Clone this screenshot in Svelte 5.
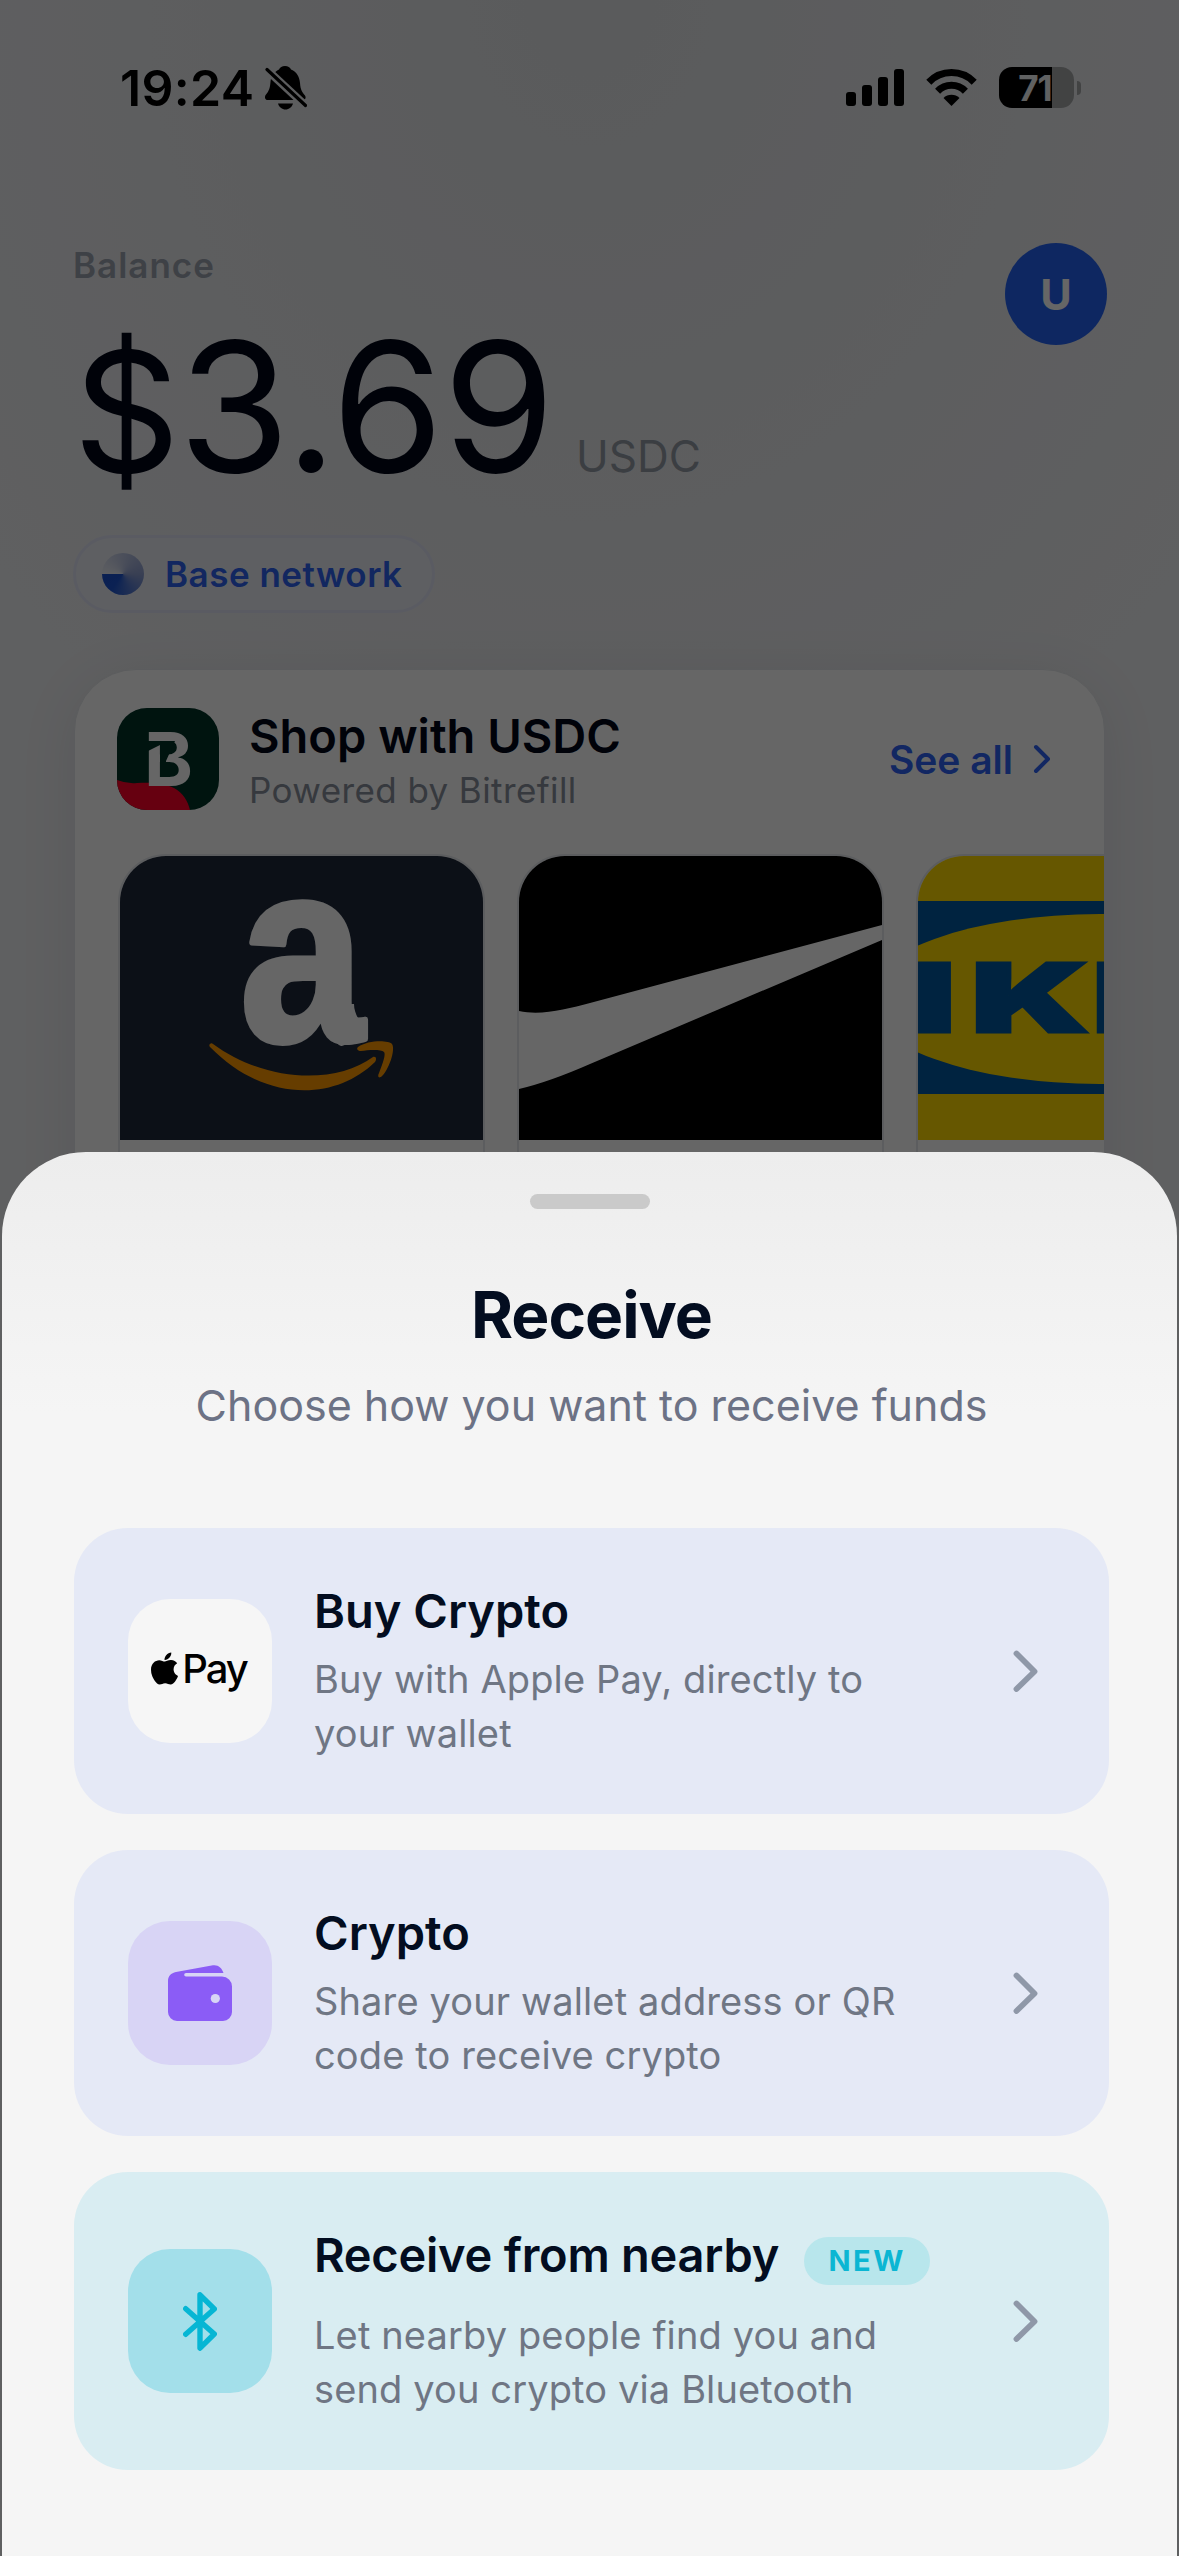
<script>
	const bars = [14, 21, 29, 37];

	const shops = ["amazon", "nike", "ikea"];

	const options = [
		{
			id: "buy",
			title: "Buy Crypto",
			lines: ["Buy with Apple Pay, directly to", "your wallet"]
		},
		{
			id: "crypto",
			title: "Crypto",
			lines: ["Share your wallet address or QR", "code to receive crypto"]
		},
		{
			id: "nearby",
			title: "Receive from nearby",
			badge: "NEW",
			lines: ["Let nearby people find you and", "send you crypto via Bluetooth"]
		}
	];
</script>

{#snippet shopImage(name)}
	<svg class="shop-image" viewBox="0 0 363 284">
		{#if name === "amazon"}
			<rect width="363" height="284" fill="#1f293b" />
			<text class="amazon-letter" x="120" y="185" textLength="124" lengthAdjust="spacingAndGlyphs">a</text>
			<path fill="#fff" d="M200 148H234C234 160 243 168 244 174C242 180 226 190 221 190C216 188 208 178 205 172Z" />
			<g fill="#ff9900">
				<path d="M93 188C145 226 215 229 253 201C256 200 257 203 255 206C215 245 145 247 90 191C88 189 91 186 93 188Z" />
				<path d="M238 191C248 184 268 184 272 188C276 194 268 215 262 220C259 223 257 221 259 217C263 207 266 198 264 196C261 193 248 194 241 195C238 195 236 193 238 191Z" />
			</g>
		{:else if name === "nike"}
			<rect width="363" height="284" fill="#000" />
			<path fill="#fff" d="M0 155C22 160 48 153 71 147L363 69V84L71 208Q30 226 0 233Z" />
		{:else}
			<rect width="363" height="284" fill="#ffda00" />
			<rect y="45" width="363" height="193" fill="#0058a0" />
			<ellipse cx="182" cy="143" rx="234" ry="85" fill="#ffda00" />
			<g class="ikea-letters">
				<text x="-26" y="176" textLength="66" lengthAdjust="spacingAndGlyphs">I</text>
				<text x="53" y="176" textLength="118" lengthAdjust="spacingAndGlyphs">K</text>
				<text x="174" y="176" textLength="94" lengthAdjust="spacingAndGlyphs">E</text>
			</g>
		{/if}
	</svg>
{/snippet}

{#snippet optionIcon(id)}
	{#if id === "buy"}
		<svg width="27" height="33" viewBox="4 32 376 448">
			<path d="M318.7 268.7c-.2-36.7 16.4-64.4 50-84.8-18.8-26.9-47.2-41.7-84.7-44.6-35.5-2.8-74.3 20.7-88.5 20.7-15 0-49.4-19.7-76.4-19.7C63.3 141.2 4 184.8 4 273.5q0 39.3 14.4 81.2c12.8 36.7 59 126.7 107.2 125.2 25.2-.6 43-17.9 75.8-17.9 31.8 0 48.3 17.9 76.4 17.9 48.6-.7 90.4-82.5 102.6-119.3-65.2-30.7-61.7-90-61.7-91.9zm-56.6-164.2c27.3-32.4 24.8-61.9 24-72.5-24.1 1.4-52 16.4-67.9 34.9-17.5 19.8-27.8 44.3-25.6 71.9 26.1 2 49.9-11.4 69.5-34.3z" />
		</svg>
		<span class="pay">Pay</span>
	{:else if id === "crypto"}
		<svg width="64" height="56" viewBox="0 0 64 56">
			<path fill="#8b5cf6" d="M8 7L45 .3C50-.5 54 3 55.5 8H18a1.8 1.8 0 0 0 0 3.6H54a10 10 0 0 1 10 10V47a9 9 0 0 1-9 9H9a9 9 0 0 1-9-9V16C0 11 3 8 8 7z" />
			<circle cx="47.3" cy="33.5" r="4.6" fill="#d8d4f5" />
		</svg>
	{:else}
		<svg width="34" height="59" viewBox="0 0 34 59" fill="none" stroke="#06b6d4" stroke-width="5.4" stroke-linecap="round" stroke-linejoin="round">
			<path d="M2.7 16.7L31.3 42L17 56.2V2.8L31.3 17L2.7 42.3" />
		</svg>
	{/if}
{/snippet}

<div class="screen">
	<div class="home">
		<div class="status">
			<div class="clock">
				<span>19:24</span>
				<svg width="42" height="44" viewBox="0 0 42 44">
					<mask id="slash">
						<rect width="42" height="44" fill="#fff" />
						<path d="M-1 1L43 42" stroke="#000" stroke-width="8" />
					</mask>
					<g mask="url(#slash)">
						<path d="M20 0C23 0 25 1.500 26 3.500C32 6 34.500 11 35 17C35.500 24 37 26 40 29.500C41.500 32 40 34 38 34H3C0 34-1 31 1 28.500C4 25 5 22 5.500 16C6 10 9 6 14 3.500C15 1.500 17 0 20 0Z" />
						<path d="M13 37.500H28C27 41 24 43.500 20.500 43.500S14 41 13 37.500Z" />
					</g>
					<path d="M2 3.500L40.500 39.500" stroke="#000" stroke-width="3.200" stroke-linecap="round" />
				</svg>
			</div>
			<div class="indicators">
				<div class="signal">
					{#each bars as height}
						<i style="height: {height}px"></i>
					{/each}
				</div>
				<svg width="51" height="37" viewBox="0 0 51 37">
					<path d="M2.800 13.200A31.500 31.500 0 0 1 48.200 13.200M11.600 22.200A19.300 19.300 0 0 1 39.400 22.200" fill="none" stroke="#000" stroke-width="7" />
					<path d="M25.500 37L17.500 29A11.500 11.500 0 0 1 33.500 29Z" />
				</svg>
				<div class="battery">
					<div class="cell">71</div>
					<i class="tip"></i>
				</div>
			</div>
		</div>

		<div class="header">
			<div class="balance">
				<div class="label">Balance</div>
				<div class="amount">
					<span class="value"><span class="sign">$</span>3.69</span>
					<span class="currency">USDC</span>
				</div>
				<div class="network">
					<i></i>
					<span>Base network</span>
				</div>
			</div>
			<div class="avatar">U</div>
		</div>

		<div class="shop">
			<div class="shop-header">
				<svg class="logo" width="102" height="102" viewBox="0 0 102 102">
					<rect width="102" height="102" fill="#003227" />
					<path d="M0 72Q10 76 20 75C40 74 48 76 57 80C66 85 71 93 73 102H0Z" fill="#ff0028" />
					<text x="27" y="78">B</text>
					<path d="M31 33H58L49 53V64H43V37L31 43Z" fill="#003227" />
				</svg>
				<div class="shop-text">
					<div class="shop-title">Shop with USDC</div>
					<div class="shop-subtitle">Powered by Bitrefill</div>
				</div>
				<div class="see-all">
					<span>See all</span>
					<svg width="18" height="30" viewBox="0 0 18 30" fill="none" stroke="#2d63f5" stroke-width="4" stroke-linecap="round" stroke-linejoin="round">
						<path d="M3 3L15 15L3 27" />
					</svg>
				</div>
			</div>
			<div class="tiles">
				{#each shops as shop}
					<div class="tile">{@render shopImage(shop)}</div>
				{/each}
			</div>
		</div>
	</div>

	<div class="scrim"></div>

	<div class="sheet">
		<div class="handle"></div>
		<h1>Receive</h1>
		<p class="intro">Choose how you want to receive funds</p>
		<div class="options">
			{#each options as option}
				<div class="option {option.id}">
					<div class="icon">{@render optionIcon(option.id)}</div>
					<div class="option-text">
						<div class="option-title">
							<span>{option.title}</span>
							{#if option.badge}
								<b>{option.badge}</b>
							{/if}
						</div>
						{#each option.lines as line}
							<div class="line">{line}</div>
						{/each}
					</div>
					<svg class="chevron" width="26" height="42" viewBox="0 0 26 42" fill="none" stroke-width="5.800" stroke-linecap="round" stroke-linejoin="round">
						<path d="M3.500 3.500L21.500 21.500L3.500 39" />
					</svg>
				</div>
			{/each}
		</div>
	</div>
</div>

<style>
	:global(body)
	{
		margin: 0;
		background: #626365;
	}

	.screen
	{
		position: relative;
		width: 1179px;
		height: 2556px;
		overflow: hidden;
		font-family: Inter, "Liberation Sans", sans-serif;
		color: #020617;
	}

	.home
	{
		box-sizing: border-box;
		height: 100%;
		padding: 0 72px 0 73px;
		background: radial-gradient(ellipse 760px 900px at 50% 0, #e1e3e6, #eeeff2);
	}

	.status
	{
		display: flex;
		box-sizing: border-box;
		justify-content: space-between;
		align-items: center;
		height: 177px;
		padding: 0 26px 2px 47px;
		color: #000;
	}

	.clock, .indicators
	{
		display: flex;
		align-items: center;
	}

	.clock
	{
		gap: 11px;
		font-size: 50px;
		font-weight: 600;
		letter-spacing: 0.3px;
	}

	.indicators
	{
		gap: 22px;
	}

	.signal
	{
		display: flex;
		align-items: flex-end;
		gap: 6px;
	}

	.signal i
	{
		width: 10px;
		border-radius: 3px;
		background: #000;
	}

	.battery
	{
		display: flex;
		align-items: center;
		gap: 3px;
	}

	.cell
	{
		width: 75px;
		height: 41px;
		border-radius: 13px;
		background: linear-gradient(to right, #000 53px, #a5a7a9 53px);
		color: #f0f2f3;
		font-size: 35px;
		font-weight: 700;
		line-height: 42px;
		text-align: center;
		text-indent: -3px;
		letter-spacing: -1px;
	}

	.tip
	{
		width: 4px;
		height: 14px;
		border-radius: 0 5px 5px 0;
		background: #a5a7a9;
	}

	.header
	{
		display: flex;
		justify-content: space-between;
		margin-top: 66px;
	}

	.label
	{
		font-size: 35px;
		font-weight: 600;
		line-height: 45px;
		letter-spacing: 1px;
		color: #9ca3af;
	}

	.amount
	{
		display: flex;
		align-items: baseline;
		gap: 22px;
		height: 180px;
		margin-top: 29px;
	}

	.value
	{
		font-size: 181px;
		line-height: 180px;
		letter-spacing: -1px;
	}

	.sign
	{
		font-size: 167px;
		letter-spacing: -2px;
	}

	.currency
	{
		font-size: 44px;
		color: #949ba6;
	}

	.network
	{
		display: inline-flex;
		box-sizing: border-box;
		align-items: center;
		gap: 21px;
		width: 362px;
		height: 78px;
		margin-top: 38px;
		padding-left: 26px;
		border: 3px solid #e0e4f6;
		border-radius: 39px;
		background: #ebeef4;
		font-size: 35px;
		font-weight: 600;
		letter-spacing: 0.5px;
		color: #2f62f0;
	}

	.network i
	{
		width: 42px;
		height: 42px;
		border-radius: 50%;
		background: conic-gradient(from 270deg, #e9ecf4, #8f9fd0 50%, #1c54d0 85%, #1b50cc);
	}

	.avatar
	{
		width: 102px;
		height: 102px;
		border-radius: 50%;
		background: #2563f2;
		color: #fff;
		font-size: 43px;
		font-weight: 700;
		line-height: 102px;
		text-align: center;
	}

	.shop
	{
		width: 1029px;
		height: 700px;
		margin-top: 56px;
		margin-left: 1px;
		border: 1px solid #e4e7ea;
		border-radius: 62px;
		background: #fff;
		box-shadow: 0 10px 60px #0f172a14;
		overflow: hidden;
	}

	.shop-header
	{
		display: flex;
		align-items: center;
		height: 102px;
		padding: 38px 53px 0 42px;
	}

	.logo
	{
		border-radius: 30px;
	}

	.logo text
	{
		font-size: 74px;
		font-weight: 700;
		fill: #fff;
	}

	.shop-text
	{
		flex: 1;
		margin-left: 30px;
	}

	.shop-title
	{
		font-size: 47px;
		font-weight: 600;
		line-height: 56px;
	}

	.shop-subtitle
	{
		margin-top: 5px;
		font-size: 35px;
		line-height: 42px;
		letter-spacing: 0.4px;
		color: #888e9b;
	}

	.see-all
	{
		display: flex;
		align-items: center;
		gap: 20px;
		font-size: 39px;
		font-weight: 600;
		color: #2d63f5;
	}

	.tiles
	{
		display: flex;
		gap: 32px;
		margin: 44px 0 0 43px;
	}

	.tile
	{
		flex: none;
		width: 363px;
		height: 400px;
		border: 2px solid #e6e9ee;
		border-radius: 48px;
		overflow: hidden;
	}

	.shop-image
	{
		display: block;
		width: 363px;
		height: 284px;
	}

	.amazon-letter
	{
		font-family: "Liberation Sans", sans-serif;
		font-size: 256px;
		font-weight: 700;
		fill: #fff;
		stroke: #fff;
		stroke-width: 6;
		stroke-linejoin: round;
	}

	.ikea-letters
	{
		font-size: 95px;
		font-weight: 900;
		fill: #0058a0;
		stroke: #0058a0;
		stroke-width: 3;
	}

	.scrim
	{
		position: absolute;
		inset: 0;
		background: rgba(0, 0, 0, 0.6);
	}

	.sheet
	{
		position: absolute;
		top: 1152px;
		right: 2px;
		bottom: 0;
		left: 2px;
		box-sizing: border-box;
		padding: 42px 68px 0 72px;
		border-radius: 84px 84px 0 0;
		background: linear-gradient(#ededed, #f5f5f5 260px);
	}

	.handle
	{
		width: 120px;
		height: 15px;
		margin-left: 456px;
		border-radius: 8px;
		background: #cacaca;
	}

	h1
	{
		margin: 66px 0 0;
		font-size: 64px;
		font-weight: 700;
		line-height: 80px;
		letter-spacing: -1px;
		text-align: center;
		color: #030d20;
	}

	.intro
	{
		margin: 23px 0 96px;
		font-size: 43px;
		line-height: 54px;
		text-align: center;
		color: #6c7285;
	}

	.options
	{
		display: flex;
		flex-direction: column;
		gap: 36px;
	}

	.option
	{
		display: flex;
		align-items: center;
		padding: 54px 70px 54px 54px;
		border-radius: 54px;
		background: #e5e9f6;
	}

	.option.nearby
	{
		background: #d9edf2;
	}

	.icon
	{
		display: flex;
		box-sizing: border-box;
		flex: none;
		align-items: center;
		justify-content: center;
		width: 144px;
		height: 144px;
		border-radius: 42px;
		background: #f6f6f6;
	}

	.buy .icon
	{
		padding: 0 2px 6px 0;
	}

	.crypto .icon
	{
		background: #d8d4f5;
	}

	.nearby .icon
	{
		background: #a3dfea;
	}

	.pay
	{
		margin-left: 4px;
		font-size: 40px;
		font-weight: 500;
		letter-spacing: -2px;
		color: #000;
	}

	.option-text
	{
		flex: 1;
		margin-left: 42px;
	}

	.option-title
	{
		display: flex;
		align-items: flex-start;
		margin-bottom: 12px;
		font-size: 47px;
		font-weight: 600;
		line-height: 58px;
		color: #030d20;
	}

	.nearby .option-title
	{
		letter-spacing: -0.25px;
	}

	.option-title b
	{
		width: 126px;
		height: 48px;
		margin: 11px 0 11px 25px;
		border-radius: 24px;
		background: #b8e6ec;
		font-size: 29px;
		font-weight: 700;
		line-height: 48px;
		letter-spacing: 2.500px;
		text-align: center;
		color: #0bb6d3;
	}

	.line
	{
		font-size: 38px;
		line-height: 54px;
		letter-spacing: 0.13px;
		white-space: nowrap;
		color: #6f7684;
	}

	.chevron
	{
		stroke: #8f98a8;
	}
</style>
